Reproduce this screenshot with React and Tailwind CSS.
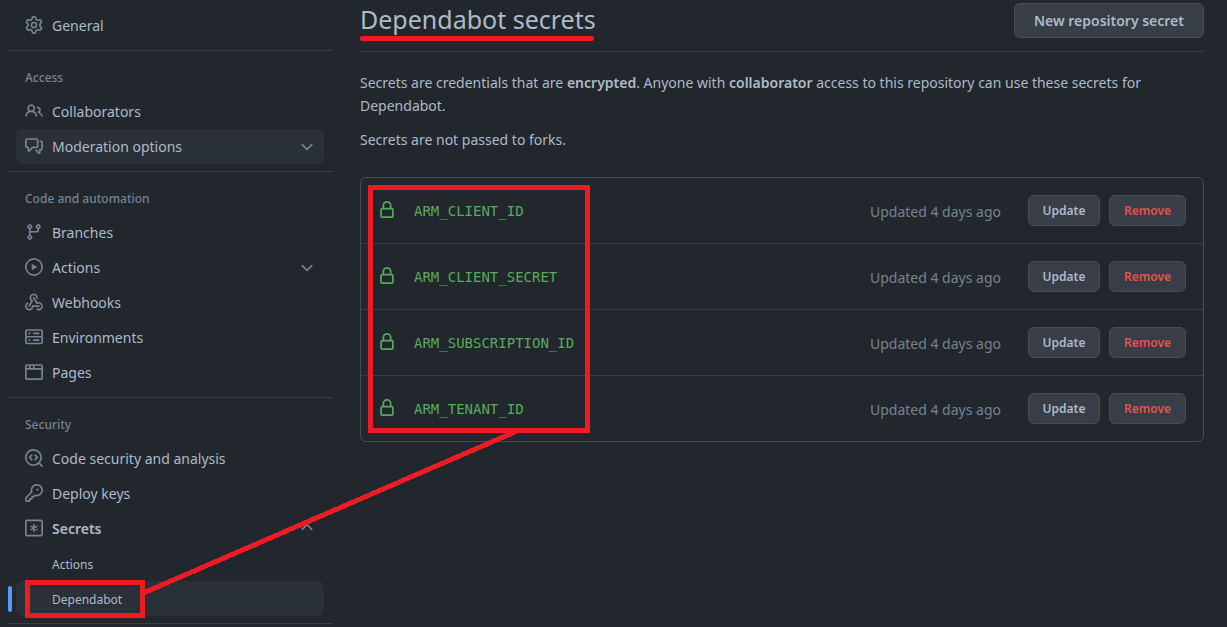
import React from "react";

const PATHS = {
  gear: "M7.429 1.525a6.593 6.593 0 011.142 0c.036.003.108.036.137.146l.289 1.105c.147.56.55.967.997 1.189.174.086.341.183.501.29.417.278.97.423 1.53.27l1.102-.303c.11-.03.175.016.195.046.219.31.41.641.573.989.014.031.022.11-.059.19l-.815.806c-.411.406-.562.957-.53 1.456a4.588 4.588 0 010 .582c-.032.499.119 1.05.53 1.456l.815.806c.08.08.073.159.059.19a6.494 6.494 0 01-.573.99c-.02.029-.086.074-.195.045l-1.103-.303c-.559-.153-1.112-.008-1.529.27-.16.107-.327.204-.5.29-.449.222-.851.628-.998 1.189l-.289 1.105c-.029.11-.101.143-.137.146a6.613 6.613 0 01-1.142 0c-.036-.003-.108-.037-.137-.146l-.289-1.105c-.147-.56-.55-.967-.997-1.189a4.502 4.502 0 01-.501-.29c-.417-.278-.97-.423-1.53-.27l-1.102.303c-.11.03-.175-.016-.195-.046a6.492 6.492 0 01-.573-.989c-.014-.031-.022-.11.059-.19l.815-.806c.411-.406.562-.957.53-1.456a4.587 4.587 0 010-.582c.032-.499-.119-1.05-.53-1.456l-.815-.806c-.08-.08-.073-.159-.059-.19a6.44 6.44 0 01.573-.99c.02-.029.086-.075.195-.045l1.103.303c.559.153 1.112.008 1.529-.27.16-.107.327-.204.5-.29.449-.222.851-.628.998-1.189l.289-1.105c.029-.11.101-.143.137-.146zM8 0c-.236 0-.47.01-.701.03-.743.065-1.29.615-1.458 1.261l-.29 1.106c-.017.066-.078.158-.211.224a5.994 5.994 0 00-.668.386c-.123.082-.233.09-.3.071L3.27 2.776c-.644-.177-1.392.02-1.82.63a7.977 7.977 0 00-.704 1.217c-.315.675-.111 1.422.363 1.891l.815.806c.05.048.098.147.088.294a6.084 6.084 0 000 .772c.01.147-.038.246-.088.294l-.815.806c-.474.469-.678 1.216-.363 1.891.2.428.436.835.704 1.218.428.609 1.176.806 1.82.63l1.103-.303c.066-.019.176-.011.299.071.213.143.436.272.668.386.133.066.194.158.212.224l.289 1.106c.169.646.715 1.196 1.458 1.26a8.094 8.094 0 001.402 0c.743-.064 1.29-.614 1.458-1.26l.29-1.106c.017-.066.078-.158.211-.224a5.98 5.98 0 00.668-.386c.123-.082.233-.09.3-.071l1.102.302c.644.177 1.392-.02 1.82-.63.268-.382.505-.789.704-1.217.315-.675.111-1.422-.364-1.891l-.814-.806c-.05-.048-.098-.147-.088-.294a6.1 6.1 0 000-.772c-.01-.147.039-.246.088-.294l.814-.806c.475-.469.679-1.216.364-1.891a7.992 7.992 0 00-.704-1.218c-.428-.609-1.176-.806-1.82-.63l-1.103.303c-.066.019-.176.011-.299-.071a5.991 5.991 0 00-.668-.386c-.133-.066-.194-.158-.212-.224L10.16 1.29C9.99.645 9.444.095 8.701.031A8.094 8.094 0 008 0zm1.5 8a1.5 1.5 0 11-3 0 1.5 1.5 0 013 0zM11 8a3 3 0 11-6 0 3 3 0 016 0z",
  people: "M5.5 3.5a2 2 0 100 4 2 2 0 000-4zM2 5.5a3.5 3.5 0 115.898 2.549 5.507 5.507 0 013.034 4.084.75.75 0 11-1.482.235 4.001 4.001 0 00-7.9 0 .75.75 0 01-1.482-.236A5.507 5.507 0 013.102 8.05 3.49 3.49 0 012 5.5zM11 4a.75.75 0 100 1.5 1.5 1.5 0 01.666 2.844.75.75 0 00-.416.672v.352a.75.75 0 00.574.73c1.2.289 2.162 1.2 2.522 2.372a.75.75 0 101.434-.44 5.01 5.01 0 00-2.56-3.012A3 3 0 0011 4z",
  discussion: "M1.5 2.75a.25.25 0 01.25-.25h8.5a.25.25 0 01.25.25v5.5a.25.25 0 01-.25.25h-3.5a.75.75 0 00-.53.22L3.5 11.44V9.25a.75.75 0 00-.75-.75h-1a.25.25 0 01-.25-.25v-5.5zM1.75 1A1.75 1.75 0 000 2.75v5.5C0 9.216.784 10 1.75 10H2v1.543a1.457 1.457 0 002.487 1.03L7.061 10h3.189A1.75 1.75 0 0012 8.25v-5.5A1.75 1.75 0 0010.25 1h-8.5zM14.5 4.75a.25.25 0 00-.25-.25h-.5a.75.75 0 110-1.5h.5c.966 0 1.75.784 1.75 1.75v5.5A1.75 1.75 0 0114.25 12H14v1.543a1.457 1.457 0 01-2.487 1.03L9.22 12.28a.75.75 0 111.06-1.06l2.22 2.22v-2.19a.75.75 0 01.75-.75h1a.25.25 0 00.25-.25v-5.5z",
  branch: "M11.75 2.5a.75.75 0 100 1.5.75.75 0 000-1.5zm-2.25.75a2.25 2.25 0 113 2.122V6A2.5 2.5 0 0110 8.5H6a1 1 0 00-1 1v1.128a2.251 2.251 0 11-1.5 0V5.372a2.25 2.25 0 111.5 0v1.836A2.492 2.492 0 016 7h4a1 1 0 001-1v-.628A2.25 2.25 0 019.5 3.25zM4.25 12a.75.75 0 100 1.5.75.75 0 000-1.5zM3.5 3.25a.75.75 0 111.5 0 .75.75 0 01-1.5 0z",
  play: "M1.5 8a6.5 6.5 0 1113 0 6.5 6.5 0 01-13 0zM8 0a8 8 0 100 16A8 8 0 008 0zM6.379 5.227A.25.25 0 006 5.442v5.117a.25.25 0 00.379.214l4.264-2.559a.25.25 0 000-.428L6.379 5.227z",
  server: "M1.75 1A1.75 1.75 0 000 2.75v4c0 .372.116.717.314 1a1.742 1.742 0 00-.314 1v4c0 .966.784 1.75 1.75 1.75h12.5A1.75 1.75 0 0016 12.75v-4c0-.372-.116-.717-.314-1 .198-.283.314-.628.314-1v-4A1.75 1.75 0 0014.25 1H1.75zm0 7.5a.25.25 0 00-.25.25v4c0 .138.112.25.25.25h12.5a.25.25 0 00.25-.25v-4a.25.25 0 00-.25-.25H1.75zM1.5 2.75a.25.25 0 01.25-.25h12.5a.25.25 0 01.25.25v4a.25.25 0 01-.25.25H1.75a.25.25 0 01-.25-.25v-4zm5.5 2A.75.75 0 017.75 4h4.5a.75.75 0 010 1.5h-4.5A.75.75 0 017 4.75zM7.75 10a.75.75 0 000 1.5h4.5a.75.75 0 000-1.5h-4.5zM3 4.75A.75.75 0 013.75 4h.5a.75.75 0 010 1.5h-.5A.75.75 0 013 4.75zM3.75 10a.75.75 0 000 1.5h.5a.75.75 0 000-1.5h-.5z",
  browser: "M0 2.75C0 1.784.784 1 1.75 1h12.5c.966 0 1.75.784 1.75 1.75v10.5A1.75 1.75 0 0114.25 15H1.75A1.75 1.75 0 010 13.25V2.75zm1.75-.25a.25.25 0 00-.25.25V4.5h2v-2H1.75zM5 2.5v2h2v-2H5zm3.5 0v2h6V2.75a.25.25 0 00-.25-.25H8.5zm6 3.5h-13v7.25c0 .138.112.25.25.25h12.5a.25.25 0 00.25-.25V6z",
  codescan: "M8.47 4.97a.75.75 0 000 1.06L9.94 7.5 8.47 8.97a.75.75 0 101.06 1.06l2-2a.75.75 0 000-1.06l-2-2a.75.75 0 00-1.06 0zM6.53 6.03a.75.75 0 00-1.06-1.06l-2 2a.75.75 0 000 1.06l2 2a.75.75 0 101.06-1.06L5.06 7.5l1.47-1.47zM12.246 13.307a7.5 7.5 0 111.06-1.06l2.474 2.473a.75.75 0 11-1.06 1.06l-2.474-2.473zM1.5 7.5a6 6 0 1110.386 4.094.75.75 0 00-.292.293A6 6 0 011.5 7.5z",
  key: "M6.5 5.5a4 4 0 112.731 3.795.75.75 0 00-.768.18L7.44 10.5H6.25a.75.75 0 00-.75.75v1.19l-.06.06H4.25a.75.75 0 00-.75.75v1.19l-.06.06H1.75a.25.25 0 01-.25-.25v-1.69l5.024-5.023a.75.75 0 00.181-.768A3.995 3.995 0 016.5 5.5zm4-5.5a5.5 5.5 0 00-5.348 6.788L.22 11.72a.75.75 0 00-.22.53v2C0 15.216.784 16 1.75 16h2a.75.75 0 00.53-.22l.5-.5a.75.75 0 00.22-.53V14h.75a.75.75 0 00.53-.22l.5-.5a.75.75 0 00.22-.53V12h.75a.75.75 0 00.53-.22l.932-.932A5.5 5.5 0 1010.5 0zm.5 6a1 1 0 100-2 1 1 0 000 2z",
  lock: "M4 4v2h-.25A1.75 1.75 0 002 7.75v5.5c0 .966.784 1.75 1.75 1.75h8.5A1.75 1.75 0 0014 13.25v-5.5A1.75 1.75 0 0012.25 6H12V4a4 4 0 10-8 0zm6.5 2V4a2.5 2.5 0 10-5 0v2h5zM12 7.5h.25a.25.25 0 01.25.25v5.5a.25.25 0 01-.25.25h-8.5a.25.25 0 01-.25-.25v-5.5a.25.25 0 01.25-.25H12z",
  down: "M12.78 6.22a.75.75 0 010 1.06l-4.25 4.25a.75.75 0 01-1.06 0L3.22 7.28a.75.75 0 011.06-1.06L8 9.94l3.72-3.72a.75.75 0 011.06 0z",
  up: "M3.22 9.78a.75.75 0 010-1.06l4.25-4.25a.75.75 0 011.06 0l4.25 4.25a.75.75 0 01-1.06 1.06L8 6.06 4.28 9.78a.75.75 0 01-1.06 0z",
};

function Icon({ name, className = "text-[#768390]" }) {
  return (
    <svg viewBox="0 0 16 16" className={`-mt-0.5 size-[18px] shrink-0 ${className}`} fill="currentColor" aria-hidden="true">
      {name === "webhook" && (
        <>
          <path d="M5.5 4.25a2.25 2.25 0 014.5 0 .75.75 0 001.5 0 3.75 3.75 0 10-6.14 2.889l-2.272 4.258a.75.75 0 001.324.706L7 7.25a.75.75 0 00-.309-1.015A2.25 2.25 0 015.5 4.25z" />
          <path d="M7.364 3.607a.75.75 0 011.03.257l2.608 4.349a3.75 3.75 0 11-.628 6.785.75.75 0 01.752-1.299 2.25 2.25 0 10-.033-3.88.75.75 0 01-1.03-.256L7.107 4.636a.75.75 0 01.257-1.03z" />
          <path d="M2.9 8.776A.75.75 0 012.625 9.8 2.25 2.25 0 106 11.75a.75.75 0 01.75-.751h5.5a.75.75 0 010 1.5H7.425a3.751 3.751 0 11-5.55-3.998.75.75 0 011.024.274z" />
        </>
      )}
      {name === "asterisk" && (
        <g fill="none" stroke="currentColor" strokeWidth="1.5" strokeLinecap="round">
          <rect x="0.75" y="1.25" width="14.5" height="13.5" rx="1" />
          <path d="M8 5v6M5.4 6.5l5.2 3M10.6 6.5l-5.2 3" strokeWidth="1.4" />
        </g>
      )}
      {PATHS[name] && <path fillRule="evenodd" d={PATHS[name]} />}
    </svg>
  );
}

const ROW = "flex h-[35px] w-full items-center gap-[9px] rounded-md pr-2 pl-[9px] text-left";

function NavLink({ icon, children }) {
  return (
    <li>
      <a href="#" className={ROW}>
        <Icon name={icon} />
        <span>{children}</span>
      </a>
    </li>
  );
}

function NavToggle({ icon, label, open = false, className = "", children }) {
  return (
    <li>
      <button type="button" aria-expanded={open} className={`${ROW} ${className}`}>
        <Icon name={icon} />
        <span className="grow">{label}</span>
        <Icon name={open ? "up" : "down"} />
      </button>
      {children}
    </li>
  );
}

function Section({ title, children }) {
  return (
    <section className="border-b border-[#373e47] pr-[9px] pb-[7px] pl-2">
      {title && (
        <h2 className="flex h-[43px] items-center px-[9px] pt-2.5 text-xs font-medium text-[#768390]">{title}</h2>
      )}
      <ul>{children}</ul>
    </section>
  );
}

const SECRETS = ["ARM_CLIENT_ID", "ARM_CLIENT_SECRET", "ARM_SUBSCRIPTION_ID", "ARM_TENANT_ID"];

const BUTTON = "rounded-md border border-[#464d57] bg-[#373e47] font-semibold";

export default function App() {
  return (
    <div className="relative flex min-h-screen items-start gap-[27px] overflow-hidden bg-[#22272e] pr-[23px] pl-2 font-['Noto_Sans','Open_Sans',sans-serif] text-sm text-[#adbac7]">
      <nav aria-label="Settings" className="w-[325px] shrink-0 pt-2">
        <Section>
          <NavLink icon="gear">General</NavLink>
        </Section>
        <Section title="Access">
          <NavLink icon="people">Collaborators</NavLink>
          <NavToggle icon="discussion" label="Moderation options" className="bg-[#2a3037]" />
        </Section>
        <Section title="Code and automation">
          <NavLink icon="branch">Branches</NavLink>
          <NavToggle icon="play" label="Actions" />
          <NavLink icon="webhook">Webhooks</NavLink>
          <NavLink icon="server">Environments</NavLink>
          <NavLink icon="browser">Pages</NavLink>
        </Section>
        <Section title="Security">
          <NavLink icon="codescan">Code security and analysis</NavLink>
          <NavLink icon="key">Deploy keys</NavLink>
          <NavToggle icon="asterisk" label="Secrets" open className="font-semibold">
            <ul className="text-xs">
              <li>
                <a href="#" className="flex h-[35px] items-center rounded-md px-9 pt-0.5">Actions</a>
              </li>
              <li className="relative">
                <span className="absolute top-[5px] -left-2 h-[26px] w-1 rounded-md bg-[#539bf5]" />
                <a href="#" aria-current="page" className="flex h-[35px] items-center rounded-md bg-[#2a3037] px-9 pt-0.5">
                  Dependabot
                </a>
                <span className="pointer-events-none absolute -top-px left-[9px] h-[38px] w-[120px] border-5 border-[#ed1c24]" />
              </li>
            </ul>
          </NavToggle>
        </Section>
      </nav>

      <main className="min-w-0 grow pt-[3px]">
        <header className="flex h-[49px] items-start justify-between border-b border-[#373e47]">
          <h1 className="relative text-[25px] leading-8">
            Dependabot secrets
            <span className="absolute top-[33px] left-0 h-[5px] w-[234px] rounded-sm bg-[#ed1c24]" />
          </h1>
          <button type="button" className={`${BUTTON} h-[35px] px-[19px]`}>New repository secret</button>
        </header>
        <p className="mt-[19px] leading-[23px]">
          Secrets are credentials that are <strong className="font-semibold">encrypted</strong>. Anyone with{" "}
          <strong className="font-semibold">collaborator</strong> access to this repository can use these secrets for
          <br />
          Dependabot.
        </p>
        <p className="mt-[11px] leading-[23px]">Secrets are not passed to forks.</p>

        <div className="relative mt-[26px]">
          <ul className="divide-y divide-[#373e47] rounded-md border border-[#444c56]">
            {SECRETS.map((name) => (
              <li key={name} className="flex items-center p-[17px]">
                <Icon name="lock" className="text-[#57ab5a]" />
                <code className="ml-[18px] grow font-['DejaVu_Sans_Mono',monospace] text-sm text-[#57ab5a]">{name}</code>
                <span className="mr-[27px] pt-0.5 text-[#768390]">Updated 4 days ago</span>
                <button type="button" className={`${BUTTON} mr-[9px] h-[31px] w-[72px] text-xs`}>Update</button>
                <button type="button" className={`${BUTTON} h-[31px] w-[77px] text-xs text-[#e5534b]`}>Remove</button>
              </li>
            ))}
          </ul>
          <span className="pointer-events-none absolute top-2 left-2 h-[248px] w-[222px] border-5 border-[#ed1c24]" />
        </div>
      </main>

      <svg
        className="pointer-events-none absolute top-[427px] left-[138px] h-[172px] w-[384px]"
        viewBox="138 427 384 172"
        aria-hidden="true"
      >
        <path d="M141 594L517 431" stroke="#ed1c24" strokeWidth="5" shapeRendering="crispEdges" />
      </svg>
    </div>
  );
}
